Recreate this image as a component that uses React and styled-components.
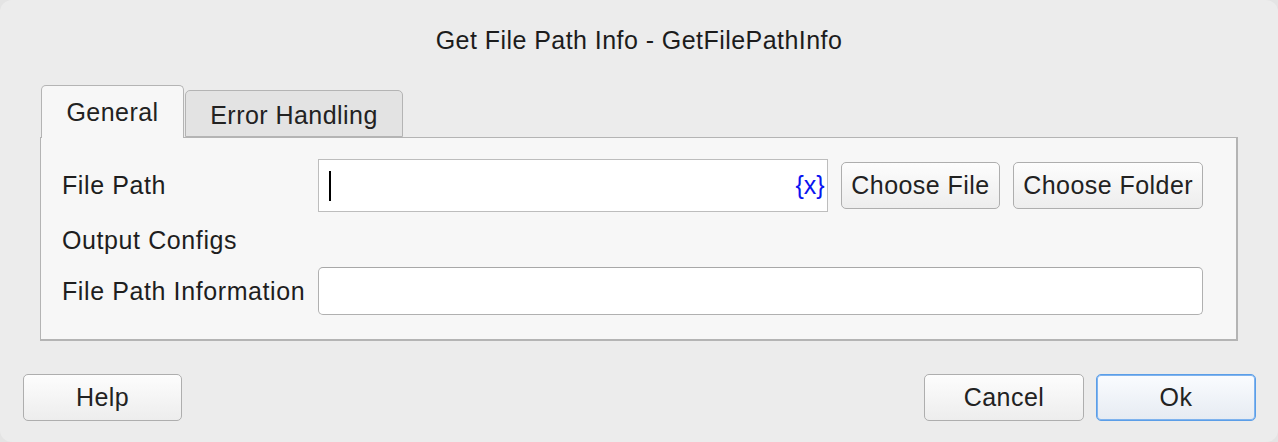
import styled, { createGlobalStyle } from "styled-components"

const GlobalStyle = createGlobalStyle`
    html, body {
        margin: 0;
        padding: 0;
        background: #e4e4e4;
    }
    body {
        font-family: "Liberation Sans", Arial, sans-serif;
        color: #222;
    }
`

const Window = styled.div`
    width: 1278px;
    height: 442px;
    box-sizing: border-box;
    background: #ececec;
    border-radius: 12px;
    display: flex;
    flex-direction: column;
    overflow: hidden;
`

const Title = styled.div`
    height: 80px;
    display: flex;
    align-items: center;
    justify-content: center;
    font-size: 25px;
    letter-spacing: 0.45px;
    color: #1c1c1c;
`

const Body = styled.div`
    padding: 5px 40px 0 40px;
`

const TabBar = styled.div`
    display: flex;
    align-items: flex-end;
    height: 52px;
    padding-left: 1px;
    position: relative;
    z-index: 1;
`

const Tab = styled.div`
    box-sizing: border-box;
    height: ${props => (props.$active ? "53px" : "47px")};
    width: ${props => props.$width};
    margin-bottom: ${props => (props.$active ? "-1px" : "0")};
    display: flex;
    align-items: center;
    justify-content: center;
    font-size: 25px;
    letter-spacing: 0.45px;
    color: #222;
    background: ${props => (props.$active ? "#f7f7f7" : "#e3e3e3")};
    border: 1px solid #b4b4b4;
    border-bottom: ${props => (props.$active ? "none" : "1px solid #b4b4b4")};
    border-radius: 5px 5px 0 0;
    padding-top: ${props => (props.$active ? "0" : "4px")};
    margin-right: ${props => (props.$active ? "1px" : "0")};
`

const Panel = styled.div`
    box-sizing: border-box;
    height: 204px;
    background: #f7f7f7;
    border: 1px solid #b4b4b4;
    border-right-width: 2px;
    border-bottom-width: 2px;
    padding: 21px 33px 0 21px;
    display: flex;
    flex-direction: column;
`

const Row = styled.div`
    display: flex;
    align-items: center;
    height: ${props => props.$height || "auto"};
    margin-bottom: ${props => props.$gap || "0"};
`

const Label = styled.div`
    width: 256px;
    font-size: 25px;
    letter-spacing: 0.6px;
    color: #1e1e1e;
    white-space: nowrap;
`

const InputBox = styled.div`
    box-sizing: border-box;
    height: ${props => props.$height};
    width: ${props => props.$width};
    background: #fff;
    border: 1px solid ${props => (props.$square ? "#bdbdbd" : "#b0b0b0")};
    border-top-color: ${props => (props.$square ? "#bdbdbd" : "#a8a8a8")};
    border-radius: ${props => (props.$square ? "0" : "5px")};
    display: flex;
    align-items: center;
    padding: 0 2px 0 10px;
`

const Caret = styled.span`
    width: 2px;
    height: 30px;
    background: #000;
`

const VarToken = styled.span`
    margin-left: auto;
    color: #0a14f0;
    font-size: 25px;
`

const Button = styled.button`
    box-sizing: border-box;
    height: 47px;
    width: ${props => props.$width};
    margin-left: ${props => props.$ml || "0"};
    font-family: "Liberation Sans", Arial, sans-serif;
    font-size: 25px;
    letter-spacing: 0.45px;
    color: #222;
    background: ${props =>
        props.$primary
            ? "linear-gradient(#fafcff, #e6ebf2)"
            : "linear-gradient(#fdfdfd, #ededed)"};
    border: 1px solid ${props => (props.$primary ? "#5b9ee8" : "#aeaeae")};
    box-shadow: ${props => (props.$primary ? "0 0 0 1px #7fb3ee inset" : "none")};
    border-radius: 5px;
    padding: 0;
    display: flex;
    align-items: center;
    justify-content: center;
`

const Footer = styled.div`
    display: flex;
    align-items: center;
    padding: 33px 22px 0 23px;
`

const Spacer = styled.div`
    flex: 1;
`

export default function App() {
    return (
        <>
            <GlobalStyle />
            <Window>
                <Title>Get File Path Info - GetFilePathInfo</Title>
                <Body>
                    <TabBar>
                        <Tab $active $width="143px">General</Tab>
                        <Tab $width="218px">Error Handling</Tab>
                    </TabBar>
                    <Panel>
                        <Row $height="53px" $gap="6px">
                            <Label>File Path</Label>
                            <InputBox $square $width="511px" $height="53px">
                                <Caret />
                                <VarToken>{"{x}"}</VarToken>
                            </InputBox>
                            <Button $width="160px" $ml="13px">Choose File</Button>
                            <Button $width="190px" $ml="13px">Choose Folder</Button>
                        </Row>
                        <Row $height="45px" $gap="4px">
                            <Label>Output Configs</Label>
                        </Row>
                        <Row $height="48px">
                            <Label>File Path Information</Label>
                            <InputBox $width="886px" $height="48px" />
                        </Row>
                    </Panel>
                </Body>
                <Footer>
                    <Button $width="159px">Help</Button>
                    <Spacer />
                    <Button $width="160px">Cancel</Button>
                    <Button $width="160px" $ml="12px" $primary>Ok</Button>
                </Footer>
            </Window>
        </>
    )
}
